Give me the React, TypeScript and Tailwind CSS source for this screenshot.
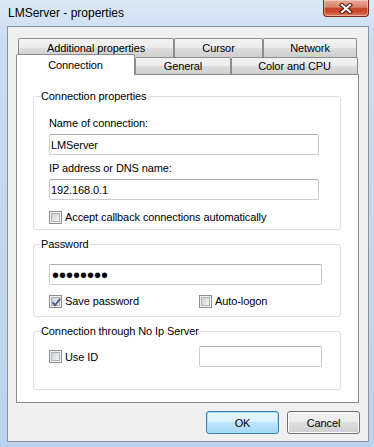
import React from 'react';

const font = "font-['Liberation_Sans',Arial,sans-serif]";

// Win7 style tab (non-selected)
function Tab({ label, w, h }: { label: string; w: string; h: string }) {
  return (
    <div
      className={`${w} ${h} flex items-center justify-center rounded-t-[2px] border border-b-0 border-[#898c95] bg-[linear-gradient(to_bottom,#f3f3f3,#ebebeb_50%,#dddddd_50%,#cfcfcf)]`}
    >
      {label}
    </div>
  );
}

function Check({ checked = false }: { checked?: boolean }) {
  return (
    <span className="relative flex h-[13px] w-[13px] shrink-0 items-center justify-center border border-[#8e8f8f] bg-[#f4f4f4]">
      <span className="h-[9px] w-[9px] border border-[#aeb3b9] bg-[linear-gradient(135deg,#cbcfd5,#f6f6f6)]" />
      {checked && (
        <svg className="absolute inset-0" width="13" height="13" viewBox="0 0 13 13">
          <path d="M2.5 6.2 L5 9.2 L10.2 2.6" fill="none" stroke="#4b5f8f" strokeWidth="1.8" />
        </svg>
      )}
    </span>
  );
}

function Group({ title, className = '', children }: { title: string; className?: string; children: React.ReactNode }) {
  return (
    <div className={`w-[308px] rounded-[3px] border border-[#d5dfe5] ${className}`}>
      <div className="-mt-[8px] ml-[6px] h-[14px] w-fit bg-white px-[1px]">{title}</div>
      <div className="pl-[15px]">{children}</div>
    </div>
  );
}

const inputCls =
  'block h-[21px] rounded-[2px] border border-[#c9ced4] border-t-[#abadb3] bg-white pl-[1px] text-[11px] text-black outline-none';

export default function App() {
  return (
    <div
      className={`flex h-[447px] w-[374px] flex-col bg-[linear-gradient(to_bottom,#dce9f7,#cadcf1_40px,#bcd3ed)] text-[11px] leading-[14px] tracking-[-0.1px] text-black ${font}`}
    >
      {/* Title bar */}
      <div className="flex h-[26px] shrink-0 items-start justify-between">
        <div className="pl-[8px] pt-[6px] text-[12px] leading-[14px] tracking-normal">LMServer - properties</div>
        <div className="mr-[5px] flex h-[17px] w-[46px] items-center justify-center rounded-b-[4px] border border-t-0 border-[#7c2a1b] bg-[linear-gradient(to_bottom,#eaa99a,#d9806a_45%,#c5472c_52%,#c9492d_75%,#e3836a)] shadow-[inset_0_0_0_1px_rgba(255,255,255,0.35)]">
          <svg width="14" height="11" viewBox="0 0 14 11">
            <path d="M3 2 L11 9 M11 2 L3 9" stroke="#4a140c" strokeWidth="4.2" strokeLinecap="square" />
            <path d="M3 2 L11 9 M11 2 L3 9" stroke="#ffffff" strokeWidth="2.2" strokeLinecap="square" />
          </svg>
        </div>
      </div>

      {/* Client area */}
      <div className="ml-[7px] flex h-[416px] w-[362px] flex-col border border-[#8a939c] bg-[#f0f0f0]">
        <div className="ml-[8px] mt-[11px] w-[343px]">
          {/* Back tab row */}
          <div className="flex pl-[2px]">
            <Tab label="Additional properties" w="w-[156px]" h="h-[19px]" />
            <Tab label="Cursor" w="w-[89px]" h="h-[19px]" />
            <Tab label="Network" w="w-[94px]" h="h-[19px]" />
          </div>
          {/* Front tab row */}
          <div className="flex h-[17px] items-start">
            <div className="relative z-10 -mt-[3px] flex h-[21px] w-[119px] items-center justify-center rounded-t-[2px] border border-b-0 border-[#898c95] bg-white pb-[1px]">
              Connection
            </div>
            <Tab label="General" w="w-[96px]" h="h-[17px]" />
            <Tab label="Color and CPU" w="w-[127px]" h="h-[17px]" />
          </div>

          {/* Tab page */}
          <div className="border border-[#898c95] bg-white pb-[12px] pl-[16px]">
            <Group title="Connection properties" className="mt-[21px] pb-[5px]">
              <div className="mt-[13px]">Name of connection:</div>
              <input
                readOnly
                value="LMServer"
                className={`${inputCls} mt-[4px] w-[270px] border-[#a9c3dc] border-t-[#8facca]`}
              />
              <div className="mt-[6px]">IP address or DNS name:</div>
              <input readOnly value="192.168.0.1" className={`${inputCls} mt-[4px] w-[270px]`} />
              <div className="mt-[10px] flex h-[14px] items-center gap-[3px]">
                <Check />
                <span>Accept callback connections automatically</span>
              </div>
            </Group>

            <Group title="Password" className="mt-[14px] pb-[8px]">
              <div className={`${inputCls} mt-[13px] flex w-[273px] items-center pl-[2px]`}>
                <span className="text-[20px] leading-none tracking-normal">••••••••</span>
              </div>
              <div className="mt-[9px] flex h-[14px] items-center">
                <div className="flex w-[150px] items-center gap-[3px]">
                  <Check checked />
                  <span>Save password</span>
                </div>
                <div className="flex items-center gap-[3px]">
                  <Check />
                  <span>Auto-logon</span>
                </div>
              </div>
            </Group>

            <Group title="Connection through No Ip Server" className="mt-[14px] pb-[22px]">
              <div className="mt-[8px] flex items-center">
                <div className="flex w-[150px] items-center gap-[3px]">
                  <Check />
                  <span>Use ID</span>
                </div>
                <input readOnly value="" className={`${inputCls} w-[123px]`} />
              </div>
            </Group>
          </div>
        </div>

        {/* Buttons */}
        <div className="mr-[8px] mt-[8px] flex justify-end gap-[8px]">
          <button className="h-[23px] w-[73px] rounded-[3px] border border-[#3c7fb1] bg-[linear-gradient(to_bottom,#eaf6fd,#d9f0fc_50%,#bee6fd_50%,#a7d9f5)] text-[11px] shadow-[inset_0_0_0_1px_#9fe3fb]">
            OK
          </button>
          <button className="h-[23px] w-[73px] rounded-[3px] border border-[#707070] bg-[linear-gradient(to_bottom,#f2f2f2,#ebebeb_50%,#dddddd_50%,#cfcfcf)] text-[11px] shadow-[inset_0_0_0_1px_#fcfcfc]">
            Cancel
          </button>
        </div>
      </div>
    </div>
  );
}
